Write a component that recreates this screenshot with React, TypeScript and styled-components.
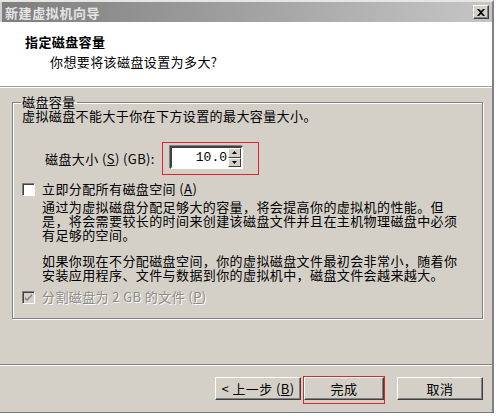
import React from 'react';
import styled, { createGlobalStyle } from 'styled-components';

const GlobalStyle = createGlobalStyle`
  html, body {
    margin: 0;
    padding: 0;
    background: #ffffff;
  }
  body {
    font-family: "Noto Sans CJK SC", "Liberation Sans", sans-serif;
    font-size: 13px;
    letter-spacing: 0.4px;
    color: #000;
  }
`;

const Frame = styled.div`
  width: 494px;
  height: 413px;
  box-sizing: border-box;
  background: #d4d0c8;
  border-top: 2px solid #e8e6e0;
  border-right: 2px solid #808080;
  border-bottom: 1px solid #7a7a7a;
  display: flex;
  flex-direction: column;
`;

const TitleBar = styled.div`
  height: 20px;
  margin-left: 2px;
  display: flex;
  align-items: center;
  justify-content: space-between;
  padding: 0 3px;
  background: linear-gradient(to right, #7e7e7e, #9a9a9a 40%, #c6c6c6);
`;

const TitleText = styled.span`
  color: #e4e4e4;
  font-weight: bold;
  font-size: 13px;
  letter-spacing: 0.6px;
`;

const CloseButton = styled.div`
  width: 16px;
  height: 14px;
  box-sizing: border-box;
  background: #d4d0c8;
  border: 1px solid;
  border-color: #ffffff #404040 #404040 #ffffff;
  box-shadow: inset -1px -1px 0 #808080;
  display: flex;
  align-items: center;
  justify-content: center;
`;

const Header = styled.div`
  height: 65px;
  flex-shrink: 0;
  background: #ffffff;
  border-bottom: 1px solid #a0a0a0;
  box-shadow: 0 1px 0 #ffffff;
  padding: 12px 0 0 25px;
  box-sizing: border-box;
`;

const HeaderTitle = styled.div`
  font-weight: bold;
  line-height: 16px;
`;

const HeaderSub = styled.div`
  margin: 4px 0 0 25px;
  line-height: 16px;
`;

const Body = styled.div`
  flex: 1;
  padding: 8px 9px 0 12px;
  display: flex;
  flex-direction: column;
`;

const Group = styled.fieldset`
  margin: 0;
  padding: 0 8px 0 9px;
  height: 224px;
  flex-shrink: 0;
  box-sizing: border-box;
  border: 1px solid #808080;
  box-shadow: 1px 1px 0 #ffffff, inset 1px 1px 0 #ffffff;
  min-width: 0;
`;

const Legend = styled.legend`
  padding: 0 1px;
  margin-left: -1px;
  line-height: 14px;
`;

const Line = styled.div<{ $indent?: number; $top?: number; $muted?: boolean }>`
  margin-left: ${p => p.$indent ?? 0}px;
  margin-top: ${p => p.$top ?? 0}px;
  line-height: 14px;
  white-space: nowrap;
  color: ${p => (p.$muted ? '#8c8a86' : '#000')};
  text-shadow: ${p => (p.$muted ? '1px 1px 0 #ffffff' : 'none')};
`;

const SizeRow = styled.div`
  display: flex;
  align-items: center;
  margin: 19px 0 0 23px;
`;

const SizeLabel = styled.span`
  width: 117px;
  white-space: nowrap;
`;

// red annotation frame around the size field
const Highlight = styled.div`
  padding: 3px 15px 5px 7px;
  border: 1px solid #e0242c;
`;

const SpinBox = styled.div`
  width: 73px;
  height: 23px;
  box-sizing: border-box;
  background: #ffffff;
  border: 2px solid;
  border-color: #404040 #ffffff #ffffff #404040;
  box-shadow: -1px -1px 0 #808080;
  display: flex;
`;

const SpinValue = styled.div`
  flex: 1;
  text-align: right;
  padding-right: 1px;
  line-height: 19px;
  font-family: "Liberation Mono", monospace;
  letter-spacing: 0;
`;

const SpinButtons = styled.div`
  width: 13px;
  display: flex;
  flex-direction: column;
`;

const SpinHalf = styled.div`
  flex: 1;
  background: #d4d0c8;
  border: 1px solid;
  border-color: #ffffff #404040 #404040 #ffffff;
  display: flex;
  align-items: center;
  justify-content: center;
`;

const CheckRow = styled.div<{ $top: number }>`
  display: flex;
  align-items: center;
  gap: 7px;
  margin-top: ${p => p.$top}px;
  line-height: 14px;
`;

const Box = styled.div<{ $disabled?: boolean }>`
  width: 13px;
  height: 13px;
  box-sizing: border-box;
  background: ${p => (p.$disabled ? '#d4d0c8' : '#ffffff')};
  border: 1px solid;
  border-color: #808080 #ffffff #ffffff #808080;
  box-shadow: inset 1px 1px 0 #404040;
  display: flex;
  align-items: center;
  justify-content: center;
`;

const Spacer = styled.div`
  flex: 1;
`;

const Separator = styled.div`
  height: 1px;
  background: #808080;
  border-bottom: 1px solid #ffffff;
  margin: 0 -9px 0 -12px;
`;

const ButtonBar = styled.div`
  display: flex;
  justify-content: flex-end;
  align-items: flex-start;
  padding-top: 11px;
  height: 46px;
  flex-shrink: 0;
  box-sizing: border-box;
`;

const Button = styled.div<{ $width: number; $gap?: number }>`
  width: ${p => p.$width}px;
  height: 23px;
  box-sizing: border-box;
  margin-left: ${p => p.$gap ?? 0}px;
  border: 1px solid;
  border-color: #ffffff #404040 #404040 #ffffff;
  box-shadow: inset -1px -1px 0 #808080;
  display: flex;
  align-items: center;
  justify-content: center;
`;

// red annotation frame drawn around the default button
const Marker = styled.div`
  width: 82px;
  height: 28px;
  box-sizing: border-box;
  margin: -1px 0 0 2px;
  border: 1px solid #e0242c;
`;

const Underline = styled.span`
  text-decoration: underline;
`;

const Close = () => (
  <svg width="8" height="7" viewBox="0 0 8 7">
    <path d="M0 0h2l2 2 2-2h2L5 3.5 8 7H6L4 5 2 7H0l3-3.5z" fill="#000" />
  </svg>
);

const Arrow = ({ up }: { up?: boolean }) => (
  <svg width="5" height="3" viewBox="0 0 5 3">
    <path d={up ? 'M2.5 0L5 3H0z' : 'M0 0h5L2.5 3z'} fill="#000" />
  </svg>
);

const Tick = () => (
  <svg width="9" height="9" viewBox="0 0 9 9">
    <path d="M1 4l2 2 5-5v2l-5 5-2-2z" fill="#808080" />
  </svg>
);

export default function App() {
  return (
    <>
      <GlobalStyle />
      <Frame>
        <TitleBar>
          <TitleText>新建虚拟机向导</TitleText>
          <CloseButton>
            <Close />
          </CloseButton>
        </TitleBar>
        <Header>
          <HeaderTitle>指定磁盘容量</HeaderTitle>
          <HeaderSub>你想要将该磁盘设置为多大?</HeaderSub>
        </Header>
        <Body>
          <Group>
            <Legend>磁盘容量</Legend>
            <Line>虚拟磁盘不能大于你在下方设置的最大容量大小。</Line>
            <SizeRow>
              <SizeLabel>
                磁盘大小 (<Underline>S</Underline>) (GB):
              </SizeLabel>
              <Highlight>
                <SpinBox>
                  <SpinValue>10.0</SpinValue>
                  <SpinButtons>
                    <SpinHalf>
                      <Arrow up />
                    </SpinHalf>
                    <SpinHalf>
                      <Arrow />
                    </SpinHalf>
                  </SpinButtons>
                </SpinBox>
              </Highlight>
            </SizeRow>
            <CheckRow $top={7}>
              <Box />
              <span>
                立即分配所有磁盘空间 (<Underline>A</Underline>)
              </span>
            </CheckRow>
            <Line $indent={20} $top={4}>
              通过为虚拟磁盘分配足够大的容量，将会提高你的虚拟机的性能。但
            </Line>
            <Line $indent={20}>是，将会需要较长的时间来创建该磁盘文件并且在主机物理磁盘中必须</Line>
            <Line $indent={20}>有足够的空间。</Line>
            <Line $indent={20} $top={12}>
              如果你现在不分配磁盘空间，你的虚拟磁盘文件最初会非常小，随着你
            </Line>
            <Line $indent={20}>安装应用程序、文件与数据到你的虚拟机中，磁盘文件会越来越大。</Line>
            <CheckRow $top={8}>
              <Box $disabled>
                <Tick />
              </Box>
              <Line $muted>
                分割磁盘为 2 GB 的文件 (<Underline>P</Underline>)
              </Line>
            </CheckRow>
          </Group>
          <Spacer />
          <Separator />
          <ButtonBar>
            <Button $width={86}>
              &lt; 上一步 (<Underline>B</Underline>)
            </Button>
            <Marker>
              <Button $width={80}>完成</Button>
            </Marker>
            <Button $width={86} $gap={12}>
              取消
            </Button>
          </ButtonBar>
        </Body>
      </Frame>
    </>
  );
}
